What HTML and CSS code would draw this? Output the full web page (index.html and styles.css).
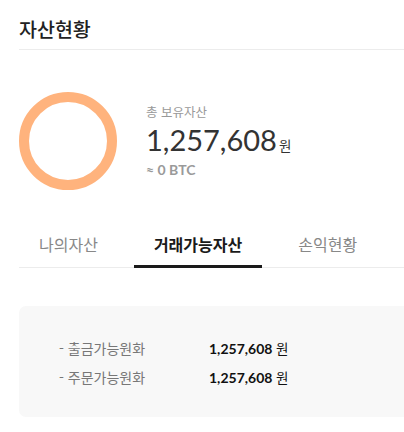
FILE: index.html
```html
<!DOCTYPE html>
<html lang="ko">
<head>
<meta charset="utf-8">
<link rel="stylesheet" href="styles.css">
</head>
<body>
<div class="page">
  <header class="head">
    <h1 class="title">자산현황</h1>
  </header>

  <section class="summary">
    <div class="ring"></div>
    <div class="total">
      <div class="total-label">총 보유자산</div>
      <div class="total-value"><span class="num">1,257,608</span><span class="unit">원</span></div>
      <div class="total-btc">≈ 0 BTC</div>
    </div>
  </section>

  <nav class="tabs">
    <span class="tab">나의자산</span>
    <span class="tab active">거래가능자산</span>
    <span class="tab">손익현황</span>
  </nav>

  <section class="card">
    <div class="row">
      <span class="label">- 출금가능원화</span>
      <span class="value"><b>1,257,608</b> <span class="won">원</span></span>
    </div>
    <div class="row">
      <span class="label">- 주문가능원화</span>
      <span class="value"><b>1,257,608</b> <span class="won">원</span></span>
    </div>
  </section>
</div>
</body>
</html>
```

FILE: styles.css
```css
html, body {
  margin: 0;
  padding: 0;
  background: #fff;
  overflow: hidden;
}

body {
  font-family: Lato, "Noto Sans CJK KR", sans-serif;
  color: #222;
}

.page {
  padding-left: 19px;
  margin-right: -40px;
}

.head {
  padding-top: 16px;
  padding-bottom: 7px;
  border-bottom: 1px solid #ececec;
}

.title {
  margin: 0;
  font-family: "Noto Sans CJK KR", sans-serif;
  font-size: 19.5px;
  line-height: 26px;
  font-weight: 500;
  color: #222;
}

.summary {
  display: flex;
  align-items: center;
  gap: 29px;
  padding-top: 42px;
}

.ring {
  width: 78px;
  height: 78px;
  border: 10px solid #ffb37d;
  border-radius: 50%;
  flex: none;
}

.total-label {
  font-family: "Noto Sans CJK KR", sans-serif;
  font-size: 12.5px;
  line-height: 16px;
  color: #999;
}

.total-value {
  line-height: 36px;
  margin-top: 2px;
  color: #333;
}

.total-value .num {
  font-size: 29px;
  font-weight: 400;
}

.total-value .unit {
  font-family: "Noto Sans CJK KR", sans-serif;
  font-size: 13.5px;
  margin-left: 2px;
}

.total-btc {
  font-size: 14px;
  font-weight: 700;
  line-height: 18px;
  margin-top: -2px;
  color: #9a9a9a;
}

.tabs {
  display: flex;
  gap: 16px;
  margin-top: 33px;
  border-bottom: 1px solid #ececec;
}

.tab {
  padding: 10px 20px 10px;
  font-family: "Noto Sans CJK KR", sans-serif;
  font-size: 16px;
  line-height: 22px;
  color: #888;
  margin-bottom: -1px;
  border-bottom: 3px solid transparent;
}

.tab.active {
  color: #1a1a1a;
  font-weight: 700;
  border-bottom-color: #1a1a1a;
}

.card {
  margin-top: 38px;
  background: #f8f8f8;
  border-radius: 7px;
  padding: 28px 0 25px 40px;
}

.row {
  display: grid;
  grid-template-columns: 150px auto;
  line-height: 28px;
}

.label {
  font-family: "Noto Sans CJK KR", sans-serif;
  font-size: 14px;
  color: #777;
}

.value {
  font-size: 14px;
  color: #111;
}

.value b {
  font-weight: 700;
}

.value .won {
  font-family: "Noto Sans CJK KR", sans-serif;
  font-size: 13.5px;
}
```
